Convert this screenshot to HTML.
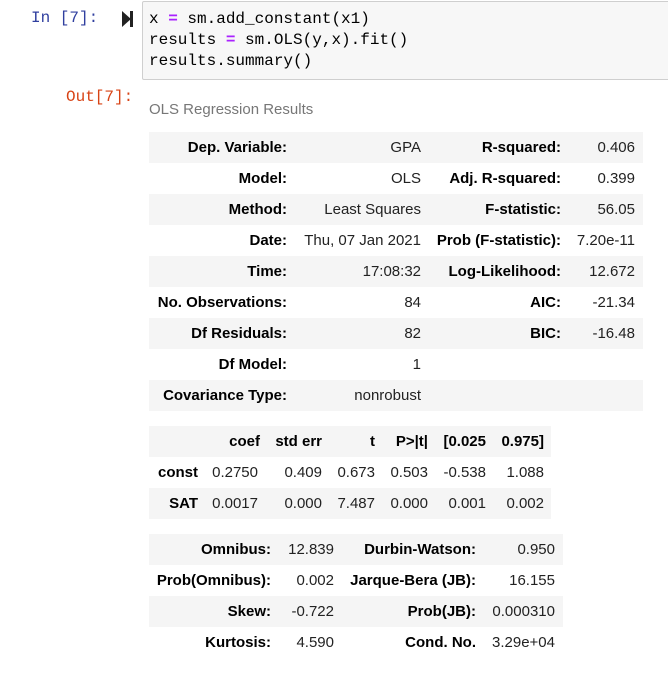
<!DOCTYPE html>
<html><head><meta charset="utf-8"><style>
body{margin:0;width:668px;height:684px;background:#fff;position:relative;overflow:hidden;font-family:"Liberation Sans",Arial,sans-serif;font-size:15px;color:#000}
.a{position:absolute;white-space:nowrap}
.mono{font-family:"Liberation Mono",monospace;font-size:16px}
.r{position:absolute;height:31px;line-height:32px}
.g{background:#f5f5f5}
.c{position:absolute;top:0;text-align:right;white-space:nowrap}
.b{font-weight:bold}
.v{color:#222}
</style></head><body>
<div class="a mono" style="left:31px;top:9px;color:#303f9f">In [7]:</div>
<div class="a" style="left:122px;top:11px;width:0;height:0;border-top:8px solid transparent;border-bottom:8px solid transparent;border-left:9px solid #222"></div>
<div class="a" style="left:130px;top:11px;width:3px;height:16px;background:#222"></div>
<div class="a" style="left:142px;top:1px;width:540px;height:77px;background:#f7f7f7;border:1px solid #cfcfcf;border-radius:2px"></div>
<div class="a mono" style="left:149px;top:9px;line-height:21px;color:#000">x <span style="color:#aa22ff;font-weight:bold">=</span> sm.add_constant(x1)<br>results <span style="color:#aa22ff;font-weight:bold">=</span> sm.OLS(y,x).fit()<br>results.summary()</div>
<div class="a mono" style="left:66px;top:88px;color:#d84315">Out[7]:</div>
<div class="a" style="left:149px;top:101px;color:#777;font-size:15px">OLS Regression Results</div>

<div class="r g" style="left:149px;top:132px;width:494px"><span class="c b" style="right:356px">Dep. Variable:</span><span class="c v" style="right:222px">GPA</span><span class="c b" style="right:82px">R-squared:</span><span class="c v" style="right:8px">0.406</span></div>
<div class="r" style="left:149px;top:163px;width:494px"><span class="c b" style="right:356px">Model:</span><span class="c v" style="right:222px">OLS</span><span class="c b" style="right:82px">Adj. R-squared:</span><span class="c v" style="right:8px">0.399</span></div>
<div class="r g" style="left:149px;top:194px;width:494px"><span class="c b" style="right:356px">Method:</span><span class="c v" style="right:222px">Least Squares</span><span class="c b" style="right:82px">F-statistic:</span><span class="c v" style="right:8px">56.05</span></div>
<div class="r" style="left:149px;top:225px;width:494px"><span class="c b" style="right:356px">Date:</span><span class="c v" style="right:222px">Thu, 07 Jan 2021</span><span class="c b" style="right:82px">Prob (F-statistic):</span><span class="c v" style="right:8px">7.20e-11</span></div>
<div class="r g" style="left:149px;top:256px;width:494px"><span class="c b" style="right:356px">Time:</span><span class="c v" style="right:222px">17:08:32</span><span class="c b" style="right:82px">Log-Likelihood:</span><span class="c v" style="right:8px">12.672</span></div>
<div class="r" style="left:149px;top:287px;width:494px"><span class="c b" style="right:356px">No. Observations:</span><span class="c v" style="right:222px">84</span><span class="c b" style="right:82px">AIC:</span><span class="c v" style="right:8px">-21.34</span></div>
<div class="r g" style="left:149px;top:318px;width:494px"><span class="c b" style="right:356px">Df Residuals:</span><span class="c v" style="right:222px">82</span><span class="c b" style="right:82px">BIC:</span><span class="c v" style="right:8px">-16.48</span></div>
<div class="r" style="left:149px;top:349px;width:494px"><span class="c b" style="right:356px">Df Model:</span><span class="c v" style="right:222px">1</span></div>
<div class="r g" style="left:149px;top:380px;width:494px"><span class="c b" style="right:356px">Covariance Type:</span><span class="c v" style="right:222px">nonrobust</span></div>

<div class="r g" style="left:149px;top:426px;width:402px"><span class="c b" style="right:291px">coef</span><span class="c b" style="right:229px">std err</span><span class="c b" style="right:176px">t</span><span class="c b" style="right:123px">P&gt;|t|</span><span class="c b" style="right:65px">[0.025</span><span class="c b" style="right:7px">0.975]</span></div>
<div class="r" style="left:149px;top:457px;width:402px"><span class="c b" style="right:353px">const</span><span class="c v" style="right:293px">0.2750</span><span class="c v" style="right:229px">0.409</span><span class="c v" style="right:176px">0.673</span><span class="c v" style="right:123px">0.503</span><span class="c v" style="right:65px">-0.538</span><span class="c v" style="right:7px">1.088</span></div>
<div class="r g" style="left:149px;top:488px;width:402px"><span class="c b" style="right:353px">SAT</span><span class="c v" style="right:293px">0.0017</span><span class="c v" style="right:229px">0.000</span><span class="c v" style="right:176px">7.487</span><span class="c v" style="right:123px">0.000</span><span class="c v" style="right:65px">0.001</span><span class="c v" style="right:7px">0.002</span></div>

<div class="r g" style="left:149px;top:534px;width:414px"><span class="c b" style="right:292px">Omnibus:</span><span class="c v" style="right:229px">12.839</span><span class="c b" style="right:87px">Durbin-Watson:</span><span class="c v" style="right:8px">0.950</span></div>
<div class="r" style="left:149px;top:565px;width:414px"><span class="c b" style="right:292px">Prob(Omnibus):</span><span class="c v" style="right:229px">0.002</span><span class="c b" style="right:87px">Jarque-Bera (JB):</span><span class="c v" style="right:8px">16.155</span></div>
<div class="r g" style="left:149px;top:596px;width:414px"><span class="c b" style="right:292px">Skew:</span><span class="c v" style="right:229px">-0.722</span><span class="c b" style="right:87px">Prob(JB):</span><span class="c v" style="right:8px">0.000310</span></div>
<div class="r" style="left:149px;top:627px;width:414px"><span class="c b" style="right:292px">Kurtosis:</span><span class="c v" style="right:229px">4.590</span><span class="c b" style="right:87px">Cond. No.</span><span class="c v" style="right:8px">3.29e+04</span></div>
</body></html>
